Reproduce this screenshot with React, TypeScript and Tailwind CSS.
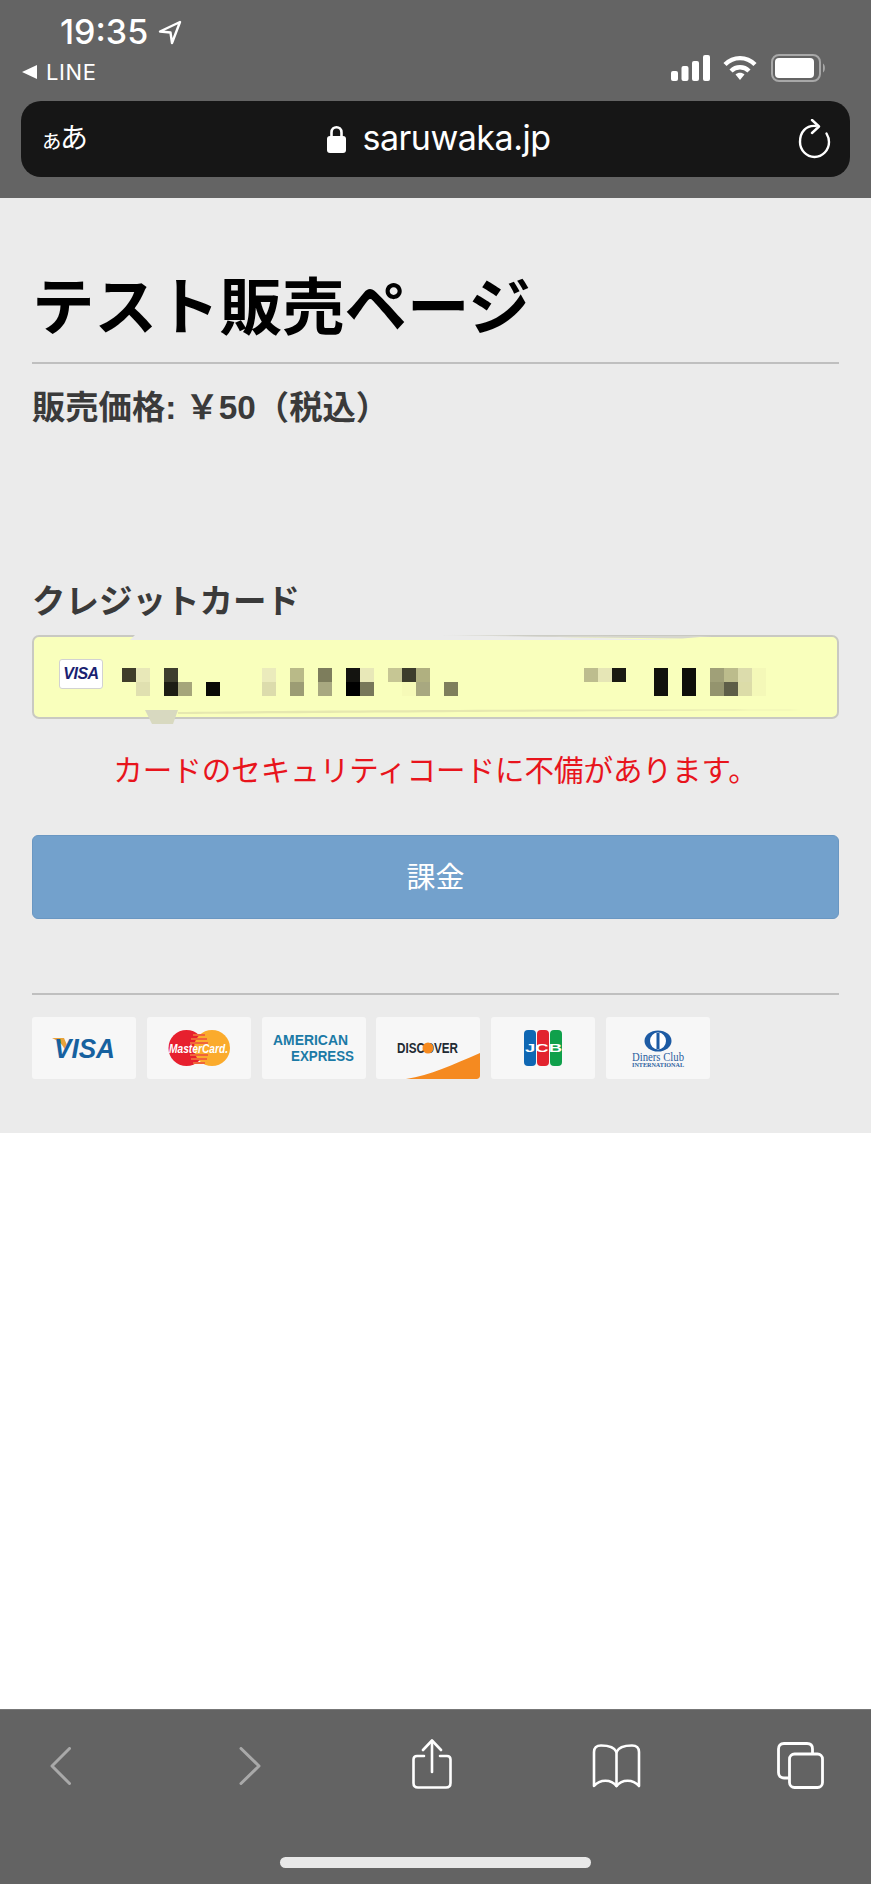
import React from 'react';

const jp = '[font-family:"Liberation_Sans","Noto_Sans_CJK_JP",sans-serif]';

// 番号のモザイク（上段・下段）
const topRow: Record<number, string> = {
  0: '#3f3d2a', 1: '#e8e8b8', 3: '#3e3e2e', 10: '#ebebbc', 12: '#b9ba88', 14: '#7d7d5c', 16: '#141410', 17: '#e8e8b8',
  19: '#c6c694', 20: '#3c3c2c', 21: '#b0b080', 33: '#bdbd8e', 34: '#e6e6b6', 35: '#1a1a12', 38: '#11110c', 40: '#0e0e0a',
  42: '#a0a078', 43: '#bcbc8c', 44: '#dcdcac', 45: '#f4f8b8',
};
const bottomRow: Record<number, string> = {
  1: '#e0e0b0', 3: '#1d1d14', 4: '#a5a57a', 6: '#0a0a06', 10: '#dcdcac', 12: '#9c9c74', 14: '#a8a880', 16: '#000000', 17: '#77775a',
  20: '#f6fab8', 21: '#a8a880', 23: '#7f7f5c', 38: '#11110c', 40: '#0e0e0a', 42: '#94946e', 43: '#5e5e48', 44: '#dcdca8', 45: '#f4f8b8',
};

const Mosaic = () => (
  <div className="ml-[19px] mt-[9px] grid grid-cols-[repeat(46,14px)] grid-rows-[14px_14px]">
    {[topRow, bottomRow].map((row, r) =>
      Array.from({ length: 46 }, (_, i) => (
        <div key={`${r}-${i}`} style={row[i] ? { backgroundColor: row[i] } : undefined} />
      ))
    )}
  </div>
);

const StatusIcons = () => (
  <div className="flex items-center pt-[34px] pr-[45px]">
    <svg width="39" height="26" viewBox="0 0 39 26" fill="#fff">
      <rect x="0" y="16" width="7" height="10" rx="2" />
      <rect x="10.5" y="11" width="7" height="15" rx="2" />
      <rect x="21" y="6" width="7" height="20" rx="2" />
      <rect x="32" y="0" width="7" height="26" rx="2" />
    </svg>
    <svg className="ml-[13px]" width="34" height="26" viewBox="0 0 34 26" fill="none" stroke="#fff" strokeWidth="4.4">
      <path d="M2 9.5 C10.5 1 23.5 1 32 9.5" />
      <path d="M8 16 C13 11 21 11 26 16" />
      <path d="M12.5 19.5 L17 25 L21.5 19.5 C19 17 15 17 12.5 19.5 Z" fill="#fff" stroke="none" />
    </svg>
    <svg className="ml-[14px]" width="55" height="28" viewBox="0 0 55 28" fill="none">
      <rect x="1" y="1" width="48" height="26" rx="7" stroke="#a8a8a8" strokeWidth="2" />
      <rect x="4" y="4" width="39" height="20" rx="4" fill="#fff" />
      <path d="M52 9.5 C54.5 10.5 54.5 17.5 52 18.5 Z" fill="#a8a8a8" />
    </svg>
  </div>
);

const UrlBar = () => (
  <div className="mx-[21px] h-[76px] rounded-[20px] bg-[#161616] flex items-center justify-between pl-[19px] pr-[19px] text-white">
    <div className="flex items-baseline w-[46px]">
      <span className={`${jp} text-[23px] leading-none`}>ぁ</span>
      <span className={`${jp} text-[28px] leading-none -ml-[3px]`}>あ</span>
    </div>
    <div className="flex items-center mr-[7px]">
      <svg width="19" height="28" viewBox="0 0 19 28">
        <path d="M4.5 12 V7.5 C4.5 0.5 14.5 0.5 14.5 7.5 V12" fill="none" stroke="#fff" strokeWidth="2.6" />
        <rect x="0" y="11" width="19" height="17" rx="3" fill="#fff" />
      </svg>
      <span className="ml-[17px] font-['Inter',sans-serif] text-[34px] leading-none tracking-[-0.5px] pb-[2px]">saruwaka.jp</span>
    </div>
    <svg width="33" height="40" viewBox="0 0 33 40" fill="none" stroke="#fff" strokeWidth="2.4" strokeLinecap="round" strokeLinejoin="round">
      <path d="M18 7 C8 6 2 13 2 23 C2 31 8.500 38 16.500 38 C24.500 38 31 31 31 23 C31 19.500 30 17 28.500 14.500" />
      <path d="M14 1 L21 7.500 L14 14" />
    </svg>
  </div>
);

const CardTile = ({ children }: { children: React.ReactNode }) => (
  <div className="w-[104px] h-[62px] rounded-[3px] bg-[#f7f7f7] overflow-hidden">
    <svg width="104" height="62" viewBox="0 0 104 62">{children}</svg>
  </div>
);

const sans = 'Liberation Sans, sans-serif';
const serif = 'Liberation Serif, serif';

const CardLogos = () => (
  <div className="flex gap-x-[10.8px] mt-[22px]">
    <CardTile>
      <path d="M20 21 L32 21 L35 28 L33 33 C31 28 27 24 20 21 Z" fill="#e9a33a" />
      <text x="22" y="41" textLength="61" lengthAdjust="spacingAndGlyphs" fontFamily={sans} fontWeight="700" fontStyle="italic" fontSize="28" fill="#16619f">VISA</text>
    </CardTile>
    <CardTile>
      <circle cx="39.500" cy="31" r="18" fill="#e7202e" />
      <circle cx="65" cy="31" r="18" fill="#fbab2c" />
      <path d="M46 18 H58 M44 22 H60 M43 26 H61 M43 38 H61 M44 42 H60 M46 46 H58" stroke="#f0663a" strokeWidth="2" />
      <text x="22" y="35.500" textLength="59" lengthAdjust="spacingAndGlyphs" fontFamily={sans} fontWeight="700" fontStyle="italic" fontSize="13" fill="#fff">MasterCard.</text>
    </CardTile>
    <CardTile>
      <text x="11" y="28" textLength="75" lengthAdjust="spacingAndGlyphs" fontFamily={sans} fontWeight="700" fontSize="14" fill="#1b7aa6">AMERICAN</text>
      <text x="29" y="44" textLength="63" lengthAdjust="spacingAndGlyphs" fontFamily={sans} fontWeight="700" fontSize="14" fill="#1b7aa6">EXPRESS</text>
    </CardTile>
    <CardTile>
      <path d="M30 62 C55 58 76 48 104 36 L104 59 Q104 62 101 62 Z" fill="#f58a20" />
      <text x="21" y="36" textLength="61" lengthAdjust="spacingAndGlyphs" fontFamily={sans} fontWeight="700" fontSize="14" fill="#222a33">DISCOVER</text>
      <circle cx="52" cy="31" r="5.500" fill="#f58a20" />
    </CardTile>
    <CardTile>
      <rect x="33" y="13" width="12" height="36" rx="4" fill="#0f67b3" />
      <rect x="46" y="13" width="12" height="36" rx="4" fill="#e2232e" />
      <rect x="59" y="13" width="12" height="36" rx="4" fill="#0fa04b" />
      <text x="34" y="35" textLength="37" lengthAdjust="spacingAndGlyphs" fontFamily={sans} fontWeight="700" fontSize="11" fill="#fff">JCB</text>
    </CardTile>
    <CardTile>
      <ellipse cx="52" cy="24" rx="13.500" ry="10.500" fill="#1d5ba4" />
      <ellipse cx="52" cy="24" rx="8" ry="8.500" fill="#fff" />
      <rect x="50.500" y="16" width="3" height="16" fill="#1d5ba4" />
      <text x="26" y="43.500" textLength="52" lengthAdjust="spacingAndGlyphs" fontFamily={serif} fontSize="12" fill="#2d5fa0">Diners Club</text>
      <text x="26" y="49.500" textLength="52" lengthAdjust="spacingAndGlyphs" fontFamily={serif} fontWeight="700" fontSize="6" fill="#2d5fa0">INTERNATIONAL</text>
    </CardTile>
  </div>
);

const CardInput = () => (
  <div className="relative h-[84px] rounded-[7px] border-2 border-[#c9c9c2] bg-[#f9ffbc] flex items-start pl-[25px] pt-[22px]">
    <div className="w-[44px] h-[30px] rounded-[3px] bg-white border border-[#d2d2d2] flex items-center justify-center">
      <span className="font-['Liberation_Sans',sans-serif] font-bold italic text-[16px] leading-none text-[#1a1f71] tracking-[-0.5px]">VISA</span>
    </div>
    <Mosaic />
    {/* 加工で欠けた枠のあと */}
    <svg className="absolute left-[-2px] top-[-2px] overflow-visible" width="807" height="84" viewBox="0 0 807 84">
      <path d="M104 -1 L98 5 L650 5 L407 -1 Z" fill="#ebebeb" />
      <path d="M407 0 C500 1 600 1 680 1 L650 3.500 C560 2.500 480 1.500 407 0 Z" fill="#d6d6ce" />
      <path d="M146 77 C300 75 600 74 782 75 C600 76 300 78 146 79 Z" fill="#e6e8b0" />
      <path d="M113 75 L146 75 L141 89 L120 89 Z" fill="#d8d9c0" />
    </svg>
  </div>
);

const BottomBar = () => (
  <div className="h-[175px] bg-[#636363] border-t border-[#777] flex flex-col">
    <div className="h-[147px] flex items-start">
      <div className="flex items-start pt-[29px] pl-[50px]">
        <svg className="mt-[8px]" width="21" height="38" viewBox="0 0 21 38" fill="none" stroke="#a9a9a9" strokeWidth="3" strokeLinecap="round" strokeLinejoin="round">
          <path d="M19.500 1.500 L2 19 L19.500 36.500" />
        </svg>
        <svg className="ml-[168px] mt-[8px]" width="22" height="38" viewBox="0 0 22 38" fill="none" stroke="#a9a9a9" strokeWidth="3" strokeLinecap="round" strokeLinejoin="round">
          <path d="M2 1.500 L20 19 L2 36.500" />
        </svg>
        <svg className="ml-[151px]" width="40" height="50" viewBox="0 0 40 50" fill="none" stroke="#fff" strokeWidth="2.6" strokeLinecap="round" strokeLinejoin="round">
          <path d="M12 17 H5 Q1.500 17 1.500 20.500 V44 Q1.500 48.500 6 48.500 H34 Q38.500 48.500 38.500 44 V20.500 Q38.500 17 35 17 H28" />
          <path d="M20 2 V33" />
          <path d="M11 11 L20 1.500 L29 11" />
        </svg>
        <svg className="ml-[140px] mt-[5px]" width="49" height="44" viewBox="0 0 49 44" fill="none" stroke="#fff" strokeWidth="2.6" strokeLinecap="round" strokeLinejoin="round">
          <path d="M24.500 8 C22 2 15 1.500 9 1.500 Q2 1.500 2 8 V42 C8 35 19 35 24.500 42 C30 35 41 35 47 42 V8 Q47 1.500 40 1.500 C34 1.500 27 2 24.500 8 Z" />
          <path d="M24.500 8 V42" />
        </svg>
        <svg className="ml-[136px] mt-[3px]" width="47" height="47" viewBox="0 0 47 47" fill="none" stroke="#fff" strokeWidth="2.8" strokeLinejoin="round">
          <rect x="12.500" y="12" width="33" height="33.500" rx="5" />
          <path d="M12.500 36 H7 Q1.500 36 1.500 30.500 V7 Q1.500 1.500 7 1.500 H30 Q35.500 1.500 35.500 7 V12" />
        </svg>
      </div>
    </div>
    <div className="w-[311px] h-[11px] rounded-full bg-[#e8e8e8] ml-[280px]" />
  </div>
);

export default function App() {
  return (
    <div className={`w-[871px] h-[1884px] flex flex-col bg-white ${jp}`}>
      <header className="h-[198px] bg-[#646464]">
        <div className="h-[101px] flex justify-between">
          <div className="pl-[22px] pt-[14px] text-white">
            <div className="flex items-center pl-[38px] h-[36px]">
              <span className="font-['Inter',sans-serif] font-medium text-[34px] leading-none">19:35</span>
              <svg className="ml-[10px]" width="24" height="25" viewBox="0 0 24 25" fill="none" stroke="#fff" strokeWidth="2.4" strokeLinejoin="round">
                <path d="M22 2 L2 11.500 L12.500 12.500 L14 23 Z" />
              </svg>
            </div>
            <div className="flex items-center mt-[11px]">
              <span className="w-0 h-0 border-y-[7px] border-y-transparent border-r-[15px] border-r-white" />
              <span className="ml-[9px] font-['Inter',sans-serif] text-[22px] leading-none tracking-[0.6px]">LINE</span>
            </div>
          </div>
          <StatusIcons />
        </div>
        <UrlBar />
      </header>

      <main className="h-[935px] bg-[#ebebeb] px-[32px]">
        <h1 className="pt-[76px] text-[62.500px] font-bold leading-[68px] text-black h-[166px] border-b-2 border-[#bfbfbf] box-border">テスト販売ページ</h1>
        <p className="mt-[24px] text-[33.300px] font-bold leading-[40px] text-[#3a3a3a]">販売価格: ￥50（税込）</p>
        <p className="mt-[154px] text-[33.500px] font-bold leading-[40px] text-[#3a3a3a]">クレジットカード</p>
        <div className="mt-[13px]">
          <CardInput />
        </div>
        <p className="mt-[32px] text-center text-[29.500px] leading-[40px] text-[#e8141c] whitespace-nowrap">カードのセキュリティコードに不備があります。</p>
        <button className="mt-[44px] w-full h-[84px] rounded-[6px] bg-[#73a1cc] border border-[#6a97c2] text-white text-[29px] pt-[4px] flex items-center justify-center">課金</button>
        <div className="mt-[74px] h-[2px] bg-[#bfbfbf]" />
        <CardLogos />
      </main>

      <div className="h-[576px] bg-white" />
      <BottomBar />
    </div>
  );
}
